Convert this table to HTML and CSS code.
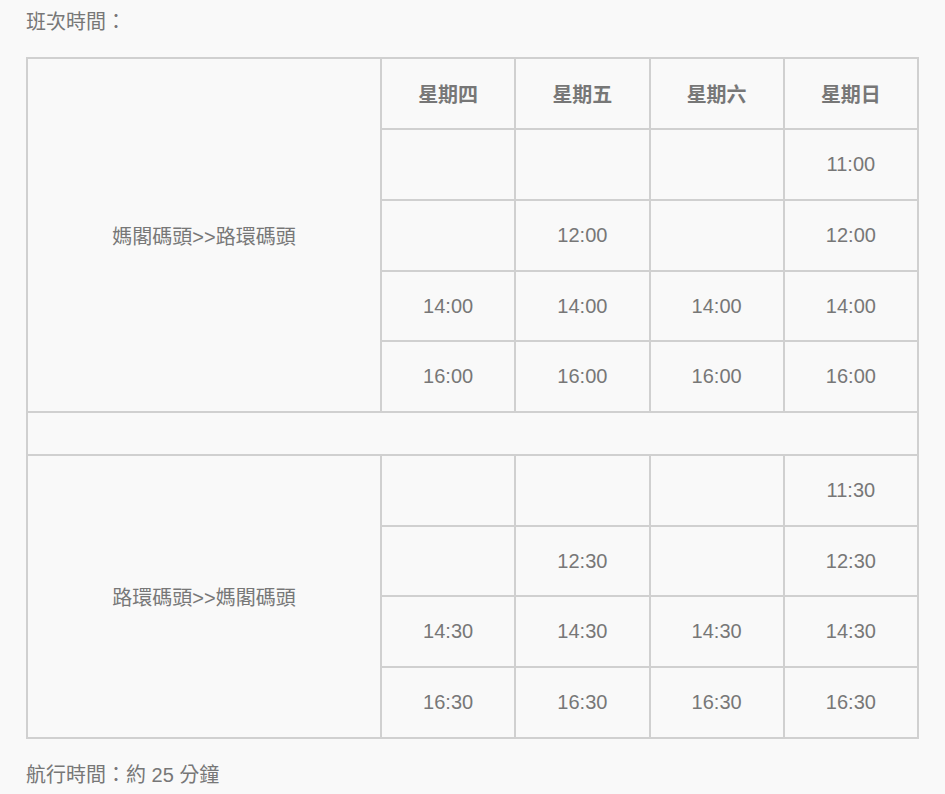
FILE: index.html
```html
<!DOCTYPE html>
<html lang="zh-TW">
<head>
<meta charset="utf-8">
<title>班次時間</title>
<link rel="stylesheet" href="styles.css">
</head>
<body>
<div class="page">
  <p class="note">班次時間：</p>
  <table class="schedule">
    <colgroup>
      <col class="col-route">
      <col class="col-day">
      <col class="col-day">
      <col class="col-day">
      <col class="col-day">
    </colgroup>
    <tr class="row head">
      <td class="route" rowspan="5">媽閣碼頭&gt;&gt;路環碼頭</td>
      <th>星期四</th>
      <th>星期五</th>
      <th>星期六</th>
      <th>星期日</th>
    </tr>
    <tr class="row"><td></td><td></td><td></td><td>11:00</td></tr>
    <tr class="row"><td></td><td>12:00</td><td></td><td>12:00</td></tr>
    <tr class="row"><td>14:00</td><td>14:00</td><td>14:00</td><td>14:00</td></tr>
    <tr class="row"><td>16:00</td><td>16:00</td><td>16:00</td><td>16:00</td></tr>
    <tr class="spacer"><td colspan="5"></td></tr>
    <tr class="row">
      <td class="route" rowspan="4">路環碼頭&gt;&gt;媽閣碼頭</td>
      <td></td><td></td><td></td><td>11:30</td>
    </tr>
    <tr class="row"><td></td><td>12:30</td><td></td><td>12:30</td></tr>
    <tr class="row"><td>14:30</td><td>14:30</td><td>14:30</td><td>14:30</td></tr>
    <tr class="row"><td>16:30</td><td>16:30</td><td>16:30</td><td>16:30</td></tr>
  </table>
  <p class="note footer">航行時間：約 25 分鐘</p>
</div>
</body>
</html>
```
FILE: styles.css
```css
html, body {
  margin: 0;
  padding: 0;
  background: #f9f9f9;
}
body {
  font-family: "Liberation Sans", "Noto Sans CJK TC", sans-serif;
  font-size: 20px;
  color: #777;
}
.page {
  padding: 8px 0 0 26px;
  width: 891px;
}
.note {
  margin: 0;
  line-height: 28px;
}
.footer {
  margin-top: 22px;
}
.schedule {
  margin-top: 21px;
  width: 891px;
  border-collapse: collapse;
  table-layout: fixed;
}
.col-route { width: 354px; }
.col-day { width: 134.25px; }
.schedule td,
.schedule th {
  border: 2px solid #d0d0d0;
  padding: 0;
  text-align: center;
  vertical-align: middle;
}
.schedule th {
  font-weight: bold;
  color: #777;
}
.row { height: 70.7px; }
.row.head { height: 71.3px; }
.spacer { height: 43px; }
```
